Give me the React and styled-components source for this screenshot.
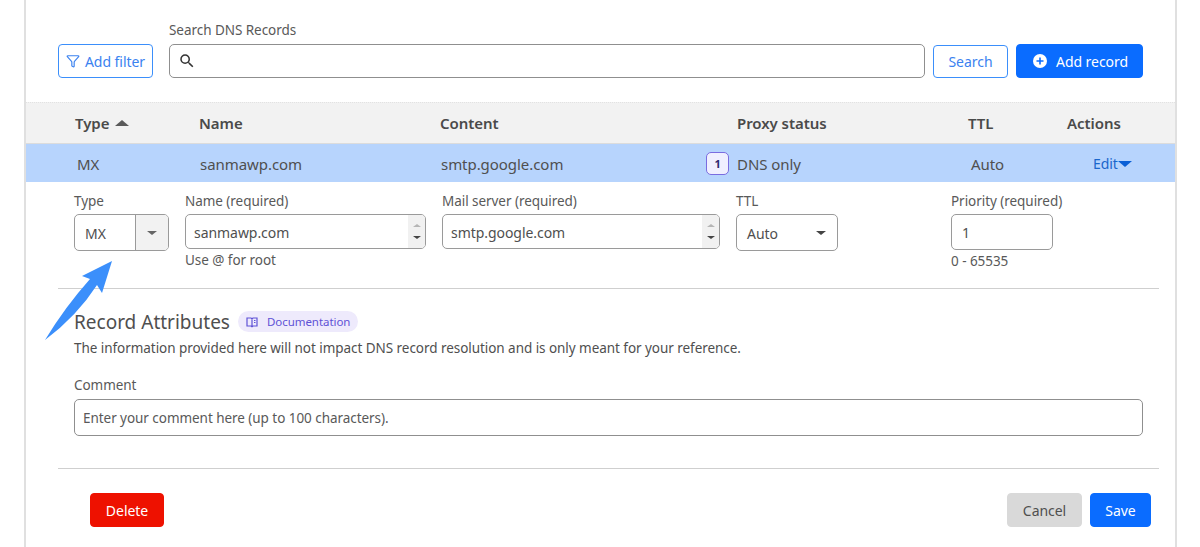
import styled, { createGlobalStyle } from "styled-components";
import { Filter } from "lucide-react";
import { MdSearch } from "react-icons/md";

const GlobalStyle = createGlobalStyle`
  html, body {
    margin: 0;
    background: #fff;
    overflow: hidden;
  }
  body {
    font-family: "Noto Sans", "Open Sans", sans-serif;
    font-size: 13.5px;
    letter-spacing: -0.05px;
    color: #4f4f4f;
  }
  * { box-sizing: border-box; }
`;

const Panel = styled.div`
  position: relative;
  width: 1153px;
  height: 547px;
  margin-left: 24px;
  border-left: 2px solid #e0e0e0;
  border-right: 2px solid #e0e0e0;
`;

const Toolbar = styled.div`
  display: flex;
  align-items: flex-end;
  height: 102px;
  padding: 21px 32px 24px;
`;

const SearchField = styled.div`
  display: flex;
  flex-direction: column;
  width: 756px;
  margin: 0 8px 0 16px;
`;

const Label = styled.label`
  display: block;
  height: 18px;
  margin-bottom: 5px;
  line-height: 18px;
  color: #595959;
`;

const SearchBox = styled.div`
  display: flex;
  align-items: center;
  height: 34px;
  padding: 0 8px;
  border: 1px solid #8f8f8f;
  border-radius: 5px;
  color: #333;
`;

const BareInput = styled.input`
  flex: 1;
  min-width: 0;
  height: 100%;
  border: 0;
  outline: 0;
  padding: 0;
  background: transparent;
  font: inherit;
  letter-spacing: inherit;
  color: #4f4f4f;
  &::placeholder { color: #595959; opacity: 1; }
`;

const Button = styled.button`
  display: inline-flex;
  align-items: center;
  justify-content: center;
  width: ${({ $width }) => $width}px;
  height: ${({ $height }) => $height || 34}px;
  padding: 0;
  border-radius: 4px;
  border: 1px solid ${({ $border }) => $border};
  background: ${({ $bg }) => $bg};
  color: ${({ $color }) => $color};
  font-family: inherit;
  font-size: 14px;
  letter-spacing: -0.05px;
`;

const AddRecordButton = styled(Button)`
  margin-left: 8px;
  padding-left: 2px;
`;

const FilterIcon = styled(Filter)`
  margin-right: 5px;
`;

const SearchGlass = styled(MdSearch)`
  margin-right: 4px;
`;

const RecordCircle = styled.svg`
  width: 14px;
  height: 14px;
  margin-right: 9px;
`;

const TableHead = styled.div`
  display: grid;
  grid-template-columns: 124px 241px 297px 231px 99px 1fr;
  align-items: center;
  height: 42px;
  padding-left: 49px;
  background: #f2f2f2;
  border-top: 1px dotted #e2e2e2;
  border-bottom: 1px solid #dcdcdc;
  font-size: 15px;
  font-weight: 600;
  color: #4a4a4a;
`;

const HeadCell = styled.div`
  display: flex;
  align-items: center;
  gap: 6px;
`;

const Caret = styled.span`
  width: 0;
  height: 0;
  margin-right: ${({ $right }) => $right || 0}px;
  border-left: ${({ $size }) => $size}px solid transparent;
  border-right: ${({ $size }) => $size}px solid transparent;
  ${({ $up, $size, $color }) =>
    $up
      ? `border-bottom: ${$size - 1}px solid ${$color};`
      : `border-top: ${$size - 1}px solid ${$color};`}
`;

const TableRow = styled.div`
  display: grid;
  grid-template-columns: 123px 241px 265px 265px 122px 1fr;
  align-items: center;
  height: 38px;
  padding: 1px 0 0 51px;
  background: #b7d4fd;
  font-size: 15px;
  color: #4f4f4f;
`;

const ProxyCell = styled.div`
  display: flex;
  align-items: center;
  gap: 8px;
`;

const Badge = styled.span`
  display: flex;
  align-items: center;
  justify-content: center;
  width: 23px;
  height: 23px;
  margin-top: -1px;
  border: 1px solid #7a6ce0;
  border-radius: 5px;
  background: #f0efff;
  color: #2e2a70;
  font-size: 11px;
  font-weight: 700;
`;

const EditLink = styled.a`
  display: flex;
  align-items: center;
  color: #1a66cc;
  font-size: 14px;
`;

const FormRow = styled.div`
  display: grid;
  grid-template-columns: 111px 257px 294px 215px 102px;
  height: 106px;
  padding: 10px 0 0 48px;
`;

const Field = styled.div`
  display: flex;
  flex-direction: column;
`;

const FieldLabel = styled.div`
  height: 18px;
  margin-bottom: 4px;
  line-height: 18px;
  white-space: nowrap;
  color: #595959;
`;

const Control = styled.div`
  display: flex;
  align-items: center;
  width: ${({ $width }) => $width}px;
  height: ${({ $height }) => $height}px;
  padding-left: ${({ $pad }) => $pad}px;
  border: 1px solid #9a9a9a;
  border-radius: 5px;
  overflow: hidden;
  color: #4f4f4f;
  font-size: 14px;
`;

const ControlValue = styled.span`
  flex: 1;
  padding-top: 1px;
`;

const SelectToggle = styled.span`
  display: flex;
  align-items: center;
  justify-content: center;
  width: 33px;
  height: 100%;
  background: #f2f2f2;
  border-left: 1px solid #9a9a9a;
`;

const Spinner = styled.span`
  display: flex;
  flex-direction: column;
  align-items: center;
  justify-content: space-around;
  width: 17px;
  height: 100%;
  padding: 4px 0;
  background: #f1f1f1;
`;

const Hint = styled.div`
  margin-top: 2px;
  line-height: 18px;
  color: #595959;
`;

const Divider = styled.hr`
  width: 1101px;
  height: 1px;
  margin: 0 0 0 32px;
  border: 0;
  background: #cfcfcf;
`;

const Attributes = styled.section`
  padding: 20px 32px 0 48px;
  height: 179px;
`;

const TitleRow = styled.div`
  display: flex;
  align-items: center;
  gap: 8px;
  height: 26px;
`;

const Title = styled.h3`
  margin: 0;
  font-size: 19px;
  font-weight: 400;
  letter-spacing: 0;
  color: #4f4f4f;
`;

const DocPill = styled.span`
  display: inline-flex;
  align-items: center;
  gap: 9px;
  height: 21px;
  padding: 0 8px 0 8px;
  margin-top: -1px;
  border-radius: 11px;
  background: #eeeafc;
  color: #5f52d6;
  font-size: 11.5px;
`;

const BookIcon = styled.svg`
  width: 12px;
  height: 12px;
`;

const Description = styled.p`
  margin: 3px 0 0;
  height: 20px;
  line-height: 20px;
  color: #4f4f4f;
`;

const CommentLabel = styled(FieldLabel)`
  margin: 18px 0 5px;
`;

const CommentBox = styled.div`
  display: flex;
  height: 37px;
  padding: 0 8px;
  border: 1px solid #8f8f8f;
  border-radius: 5px;
`;

const Footer = styled.div`
  display: flex;
  align-items: center;
  gap: 8px;
  padding: 24px 24px 0 64px;
`;

const Spacer = styled.div`
  flex: 1;
`;

const Annotation = styled.svg`
  position: absolute;
  left: 17px;
  top: 258px;
  width: 72px;
  height: 85px;
`;

const SpinnerArrows = () => (
  <Spinner>
    <Caret $up $size={4} $color="#b5b5b5" />
    <Caret $size={4} $color="#444" />
  </Spinner>
);

export default function App() {
  return (
    <>
      <GlobalStyle />
      <Panel>
        <Toolbar>
          <Button $width={95} $border="#3b8ffb" $bg="#fff" $color="#3b82f0">
            <FilterIcon size={14} strokeWidth={2} />
            Add filter
          </Button>
          <SearchField>
            <Label>Search DNS Records</Label>
            <SearchBox>
              <SearchGlass size={18} />
              <BareInput />
            </SearchBox>
          </SearchField>
          <Button $width={75} $height={33} $border="#3b8ffb" $bg="#fff" $color="#3b82f0">
            Search
          </Button>
          <AddRecordButton $width={127} $border="#0a6cff" $bg="#0a6cff" $color="#fff">
            <RecordCircle viewBox="0 0 14 14">
              <circle cx="7" cy="7" r="7" fill="#fff" />
              <path d="M7 3.5v7M3.5 7h7" stroke="#0a6cff" strokeWidth="1.6" />
            </RecordCircle>
            Add record
          </AddRecordButton>
        </Toolbar>

        <TableHead>
          <HeadCell>
            Type <Caret $up $size={7} $color="#5a5a5a" />
          </HeadCell>
          <HeadCell>Name</HeadCell>
          <HeadCell>Content</HeadCell>
          <HeadCell>Proxy status</HeadCell>
          <HeadCell>TTL</HeadCell>
          <HeadCell>Actions</HeadCell>
        </TableHead>

        <TableRow>
          <div>MX</div>
          <div>sanmawp.com</div>
          <div>smtp.google.com</div>
          <ProxyCell>
            <Badge>1</Badge>
            DNS only
          </ProxyCell>
          <div>Auto</div>
          <EditLink>
            Edit
            <Caret $size={7} $color="#0a5fd6" />
          </EditLink>
        </TableRow>

        <FormRow>
          <Field>
            <FieldLabel>Type</FieldLabel>
            <Control $width={95} $height={37} $pad={10}>
              <ControlValue>MX</ControlValue>
              <SelectToggle>
                <Caret $size={5} $color="#666" />
              </SelectToggle>
            </Control>
          </Field>
          <Field>
            <FieldLabel>Name (required)</FieldLabel>
            <Control $width={241} $height={35} $pad={8}>
              <ControlValue>sanmawp.com</ControlValue>
              <SpinnerArrows />
            </Control>
            <Hint>Use @ for root</Hint>
          </Field>
          <Field>
            <FieldLabel>Mail server (required)</FieldLabel>
            <Control $width={278} $height={35} $pad={8}>
              <ControlValue>smtp.google.com</ControlValue>
              <SpinnerArrows />
            </Control>
          </Field>
          <Field>
            <FieldLabel>TTL</FieldLabel>
            <Control $width={102} $height={37} $pad={10}>
              <ControlValue>Auto</ControlValue>
              <Caret $size={5} $color="#444" $right={11} />
            </Control>
          </Field>
          <Field>
            <FieldLabel>Priority (required)</FieldLabel>
            <Control $width={102} $height={36} $pad={10}>
              <ControlValue>1</ControlValue>
            </Control>
            <Hint>0 - 65535</Hint>
          </Field>
        </FormRow>

        <Divider />

        <Attributes>
          <TitleRow>
            <Title>Record Attributes</Title>
            <DocPill>
              <BookIcon viewBox="0 0 12 12" fill="none" stroke="currentColor" strokeWidth="1.2">
                <path d="M1 2h4l1 .8L7 2h4v8H7l-1 .8L5 10H1zM6 2.8v8M8 4.5h1.5M8 6.5h1.5" />
              </BookIcon>
              Documentation
            </DocPill>
          </TitleRow>
          <Description>
            The information provided here will not impact DNS record resolution and is only meant for your reference.
          </Description>
          <CommentLabel>Comment</CommentLabel>
          <CommentBox>
            <BareInput placeholder="Enter your comment here (up to 100 characters)." />
          </CommentBox>
        </Attributes>

        <Divider />

        <Footer>
          <Button $width={74} $border="#ee1100" $bg="#ee1100" $color="#fff">
            Delete
          </Button>
          <Spacer />
          <Button $width={75} $border="#d9d9d9" $bg="#d9d9d9" $color="#4f4f4f">
            Cancel
          </Button>
          <Button $width={61} $border="#0a6cff" $bg="#0a6cff" $color="#fff">
            Save
          </Button>
        </Footer>

        <Annotation viewBox="0 0 72 85">
          <path d="M69 3 L39 18 L47 21 Q22 49 2 82 Q34 58 54 27 L59 35 Z" fill="#3b8ffb" />
        </Annotation>
      </Panel>
    </>
  );
}
